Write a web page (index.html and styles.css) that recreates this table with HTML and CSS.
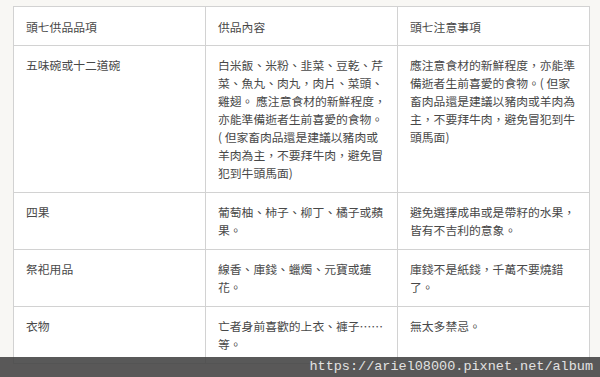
FILE: index.html
```html
<!DOCTYPE html>
<html lang="zh-Hant-TW">
<head>
<meta charset="utf-8">
<title>頭七供品</title>
<link rel="stylesheet" href="styles.css">
</head>
<body>
<div class="page">
  <table class="offer-table">
    <colgroup>
      <col class="c1"><col class="c2"><col class="c3">
    </colgroup>
    <thead>
      <tr><th>頭七供品品項</th><th>供品內容</th><th>頭七注意事項</th></tr>
    </thead>
    <tbody>
      <tr>
        <td>五味碗或十二道碗</td>
        <td>白米飯、米粉、韭菜、豆乾、芹<br>菜、魚丸、肉丸，肉片、菜頭、<br>雞翅。 應注意食材的新鮮程度，<br>亦能準備逝者生前喜愛的食物。<br>( 但家畜肉品還是建議以豬肉或<br>羊肉為主，不要拜牛肉，避免冒<br>犯到牛頭馬面)</td>
        <td>應注意食材的新鮮程度，亦能準<br>備逝者生前喜愛的食物。( 但家<br>畜肉品還是建議以豬肉或羊肉為<br>主，不要拜牛肉，避免冒犯到牛<br>頭馬面)</td>
      </tr>
      <tr>
        <td>四果</td>
        <td>葡萄柚、柿子、柳丁、橘子或蘋<br>果。</td>
        <td>避免選擇成串或是帶籽的水果，<br>皆有不吉利的意象。</td>
      </tr>
      <tr>
        <td>祭祀用品</td>
        <td>線香、庫錢、蠟燭、元寶或蓮<br>花。</td>
        <td>庫錢不是紙錢，千萬不要燒錯<br>了。</td>
      </tr>
      <tr>
        <td>衣物</td>
        <td>亡者身前喜歡的上衣、褲子……<br>等。</td>
        <td>無太多禁忌。</td>
      </tr>
    </tbody>
  </table>
</div>
<div class="watermark">https://ariel08000.pixnet.net/album</div>
</body>
</html>
```

FILE: styles.css
```css
html, body {
  margin: 0;
  padding: 0;
}
body {
  width: 600px;
  height: 377px;
  overflow: hidden;
  background: #f8f7f4;
  position: relative;
  font-family: "Noto Sans CJK TC", "Noto Sans", sans-serif;
}
.page {
  padding: 6px 12px 0 13px;
}
.offer-table {
  border-collapse: collapse;
  table-layout: fixed;
  width: 576px;
  background: #ffffff;
  color: #484848;
  font-size: 11.8px;
  line-height: 18px;
}
.c1 { width: 192px; }
.c2 { width: 192px; }
.c3 { width: 192px; }
.offer-table th,
.offer-table td {
  border: 1px solid #d2d2d2;
  padding: 10px 12px 10px 12px;
  text-align: left;
  vertical-align: top;
  font-weight: normal;
  white-space: nowrap;
}
.offer-table th {
  padding-top: 11px;
  padding-bottom: 9px;
}
.watermark {
  position: absolute;
  left: 0;
  right: 0;
  top: 357px;
  height: 20px;
  background: rgba(66, 66, 66, 0.88);
  color: #e2e2e2;
  font-family: "Liberation Mono", monospace;
  font-size: 13.5px;
  line-height: 20px;
  text-align: right;
  padding-right: 7px;
  box-sizing: border-box;
}
```
